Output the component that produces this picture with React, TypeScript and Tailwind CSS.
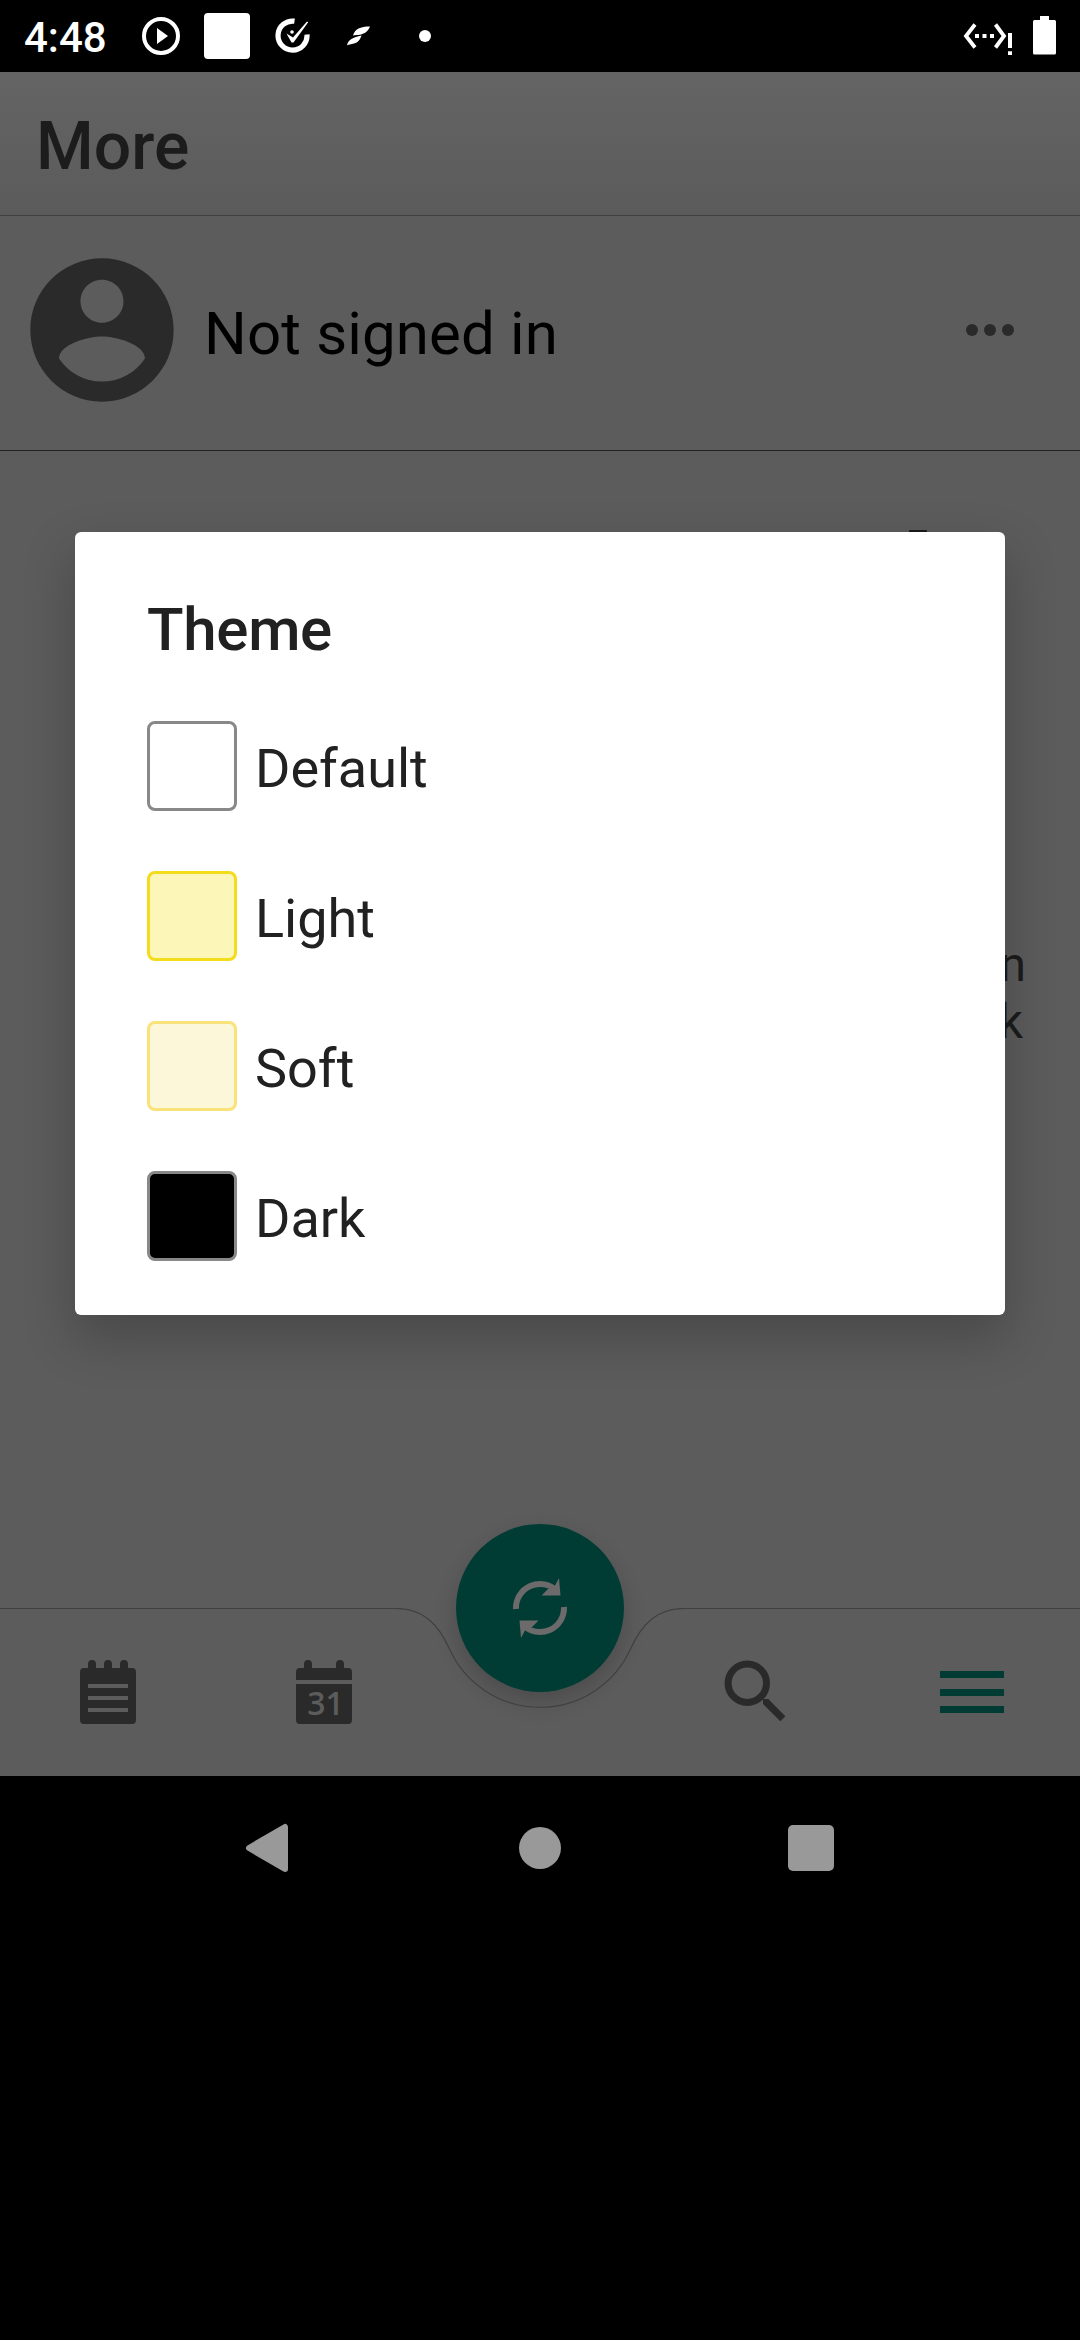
import React from "react";

const themes = [
  { name: "Default", swatch: "bg-white border-[#888888]" },
  { name: "Light", swatch: "bg-[#fdf6b9] border-[#f3dc1c]" },
  { name: "Soft", swatch: "bg-[#fdf7da] border-[#fae27b]" },
  { name: "Dark", swatch: "bg-black border-[#888888]" },
];

function StatusBar() {
  return (
    <header className="flex h-[72px] shrink-0 items-center bg-black pl-6 pr-6 text-white">
      <span className="w-[84px] pt-[3px] text-[42px] leading-none font-medium">4:48</span>
      <svg className="ml-[34px] size-[38px]" viewBox="0 0 38 38">
        <circle cx="19" cy="19" r="17" fill="none" stroke="#fff" strokeWidth="4" />
        <path d="M15 11v16l11-8z" fill="#fff" />
      </svg>
      <span className="ml-6 size-[46px] rounded bg-white" />
      <svg className="ml-6 size-9" viewBox="0 0 36 36" fill="none">
        <path d="M20.500 3.200A14.500 14.500 0 1 0 33 16.500" stroke="#fff" strokeWidth="5.200" />
        <path d="M12.500 15.500L19 19.500L33 3.500L34.200 4.200L19.500 24.500L17.500 24.500Z" fill="#fff" />
        <circle cx="18" cy="14" r="1.800" fill="#fff" />
      </svg>
      <svg className="ml-[37px] h-6 w-6" viewBox="0 0 24 24" fill="#fff">
        <path d="M6 11.500C8 5 13 2.500 23 2.500C20.500 8 17.500 9.500 14 10.500C11 11.200 8 11 6 11.500Z" />
        <path d="M0 21.500C1 15.500 6 13.500 14.500 11.500C13 16 11 18.500 7 19.500C4 20.200 1.500 20.500 0 21.500Z" />
      </svg>
      <span className="ml-[48px] size-3 rounded-full bg-white" />
      <svg className="ml-auto h-[38px] w-[50px]" viewBox="0 -2 50 38">
        <path d="M12 5.500L3 17l9 11.500M32.500 5.500L41 17l-8.500 11.500" fill="none" stroke="#fff" strokeWidth="3.800" />
        <path d="M12 15h4v4h-4zM19.500 15h4v4h-4zM27 15h4v4h-4zM45 14h4v15h-4zM45 32.300h4v3.700h-4z" fill="#fff" />
      </svg>
      <svg className="ml-[20px] h-[40px] w-[23px]" viewBox="0 0 23 40" fill="#fff">
        <path d="M7 0h9v4h5.500q1.500 0 1.500 1.500v31.500q0 1.500-1.500 1.500h-20q-1.500 0-1.500-1.500v-31.500q0-1.500 1.500-1.500H7z" />
      </svg>
    </header>
  );
}

function AccountRow() {
  return (
    <section className="flex h-[235px] shrink-0 items-center border-b border-[#222222] pr-[66px] pb-1.5 pl-4">
      <svg className="size-[172px] shrink-0" viewBox="0 0 24 24" fill="#2a2a2a">
        <path d="M12 2C6.480 2 2 6.480 2 12s4.480 10 10 10 10-4.480 10-10S17.520 2 12 2zm0 3c1.660 0 3 1.340 3 3s-1.340 3-3 3-3-1.340-3-3 1.340-3 3-3zm0 14.200c-2.500 0-4.710-1.280-6-3.220.030-1.990 4-3.080 6-3.080 1.990 0 5.970 1.090 6 3.080-1.290 1.940-3.500 3.220-6 3.220z" />
      </svg>
      <span className="ml-4 pt-[7px] text-[60px] leading-none tracking-[0.15px] text-black">Not signed in</span>
      <div className="ml-auto flex gap-1.5">
        <i className="size-3 rounded-full bg-[#2a2a2a]" />
        <i className="size-3 rounded-full bg-[#2a2a2a]" />
        <i className="size-3 rounded-full bg-[#2a2a2a]" />
      </div>
    </section>
  );
}

function BottomBar() {
  return (
    <nav className="relative mt-auto h-[168px] shrink-0">
      <div className="absolute -top-[84px] left-[456px] size-[168px] rounded-full shadow-[0_10px_22px_rgba(0,0,0,0.18)]" />
      <svg className="absolute top-0 left-0 h-[104px] w-full" viewBox="0 0 1080 104" fill="none">
        <path
          d="M0 .5H396C423 .5 438 16 449 40A99.500 99.500 0 0 0 631 40C642 16 657 .5 684 .5H1080"
          stroke="#404040"
          strokeWidth="1.200"
        />
      </svg>
      <div className="absolute -top-[84px] left-[456px] flex size-[168px] items-center justify-center rounded-full bg-[#003c34]">
        <svg className="size-[60px]" viewBox="0 0 60 60">
          <g id="half">
            <path d="M6 31A24 24 0 0 1 47 13" fill="none" stroke="#6c6a6a" strokeWidth="6" />
            <path d="M49 0L50.500 17.500H31.500L38 11L44 9.500Z" fill="#6c6a6a" />
          </g>
          <use href="#half" transform="rotate(180 30 30)" />
        </svg>
      </div>
      <div className="grid h-full grid-cols-5 items-center justify-items-center">
        <svg className="h-16 w-14" viewBox="0 0 56 64">
          <path
            fill="#2a2a2a"
            d="M4 8H8V4a4 4 0 0 1 8 0v4h8V4a4 4 0 0 1 8 0v4h8V4a4 4 0 0 1 8 0v4h4q4 0 4 4v48q0 4-4 4H4q-4 0-4-4V12q0-4 4-4z"
          />
          <path fill="#5c5c5c" d="M8 24h40v4H8zM8 36h40v4H8zM8 48h40v4H8z" />
        </svg>
        <svg className="h-16 w-14" viewBox="0 0 56 64">
          <path
            fill="#2a2a2a"
            d="M4 8H8V4a4 4 0 0 1 8 0v4h24V4a4 4 0 0 1 8 0v4h4q4 0 4 4v48q0 4-4 4H4q-4 0-4-4V12q0-4 4-4z"
          />
          <path fill="#5c5c5c" d="M0 20h56v4H0z" />
          <text x="29.500" y="55" textAnchor="middle" fill="#5c5c5c" className="font-['Open_Sans'] text-[32px] font-semibold">
            31
          </text>
        </svg>
        <span />
        <svg className="size-16" viewBox="0 0 64 64" fill="none" stroke="#2a2a2a">
          <circle cx="23.300" cy="23.200" r="19.200" strokeWidth="7" />
          <path d="M39 39h5.300l17 17.300-5 5L39 44z" fill="#2a2a2a" stroke="none" />
        </svg>
        <div className="flex w-16 flex-col gap-[10.500px]">
          <i className="h-[7px] bg-[#003c34]" />
          <i className="h-[7px] bg-[#003c34]" />
          <i className="h-[7px] bg-[#003c34]" />
        </div>
      </div>
    </nav>
  );
}

function SystemNav() {
  return (
    <footer className="flex h-36 items-center bg-black">
      <svg className="ml-[245px] h-[50px] w-[44px]" viewBox="0 0 44 50">
        <path d="M4 25L40 4V46z" fill="#999" stroke="#999" strokeWidth="6" strokeLinejoin="round" />
      </svg>
      <span className="ml-[230px] size-[42px] rounded-full bg-[#999999]" />
      <span className="ml-[226.500px] size-[46px] rounded-[5px] bg-[#999999]" />
    </footer>
  );
}

function ThemeDialog() {
  return (
    <div
      role="dialog"
      className="absolute top-[532px] left-[75px] flex h-[783px] w-[930px] flex-col rounded-md bg-white pt-[68px] pl-[72px] text-[#212121] shadow-[0_22px_50px_4px_rgba(0,0,0,0.2)]"
    >
      <h2 className="text-[60px] leading-none font-medium tracking-[-0.3px]">Theme</h2>
      <ul className="mt-[61px] flex flex-col gap-[60px]">
        {themes.map((t) => (
          <li key={t.name} className="flex h-[90px] items-center gap-[18px]">
            <span className={`size-[90px] rounded-lg border-[3px] ${t.swatch}`} />
            <span className="pt-1.5 text-[54px] leading-none">{t.name}</span>
          </li>
        ))}
      </ul>
    </div>
  );
}

export default function App() {
  return (
    <div className="relative h-[2340px] w-[1080px] overflow-hidden bg-black font-[Roboto,sans-serif]">
      <div className="flex h-[1776px] flex-col bg-[#5c5c5c]">
        <StatusBar />
        <div className="flex h-[144px] shrink-0 items-center border-b border-[#404040] bg-linear-to-b from-[#646464] to-[#5b5b5b] pt-1.5 pl-9">
          <h1 className="text-[66px] leading-none font-medium text-[#1c1c1c]">More</h1>
        </div>
        <AccountRow />
        <div className="flex flex-col items-end">
          <i className="mt-[79px] mr-[153px] h-3 w-[18px] rounded-[1px] bg-[#1a1a1a]" />
          <p className="mt-[394px] mr-[54px] text-right text-[48px] leading-[57px] text-[#1c1c1c]">
            n<br />
            <span className="mr-[3px]">k</span>
          </p>
        </div>
        <BottomBar />
      </div>
      <SystemNav />
      <ThemeDialog />
    </div>
  );
}
